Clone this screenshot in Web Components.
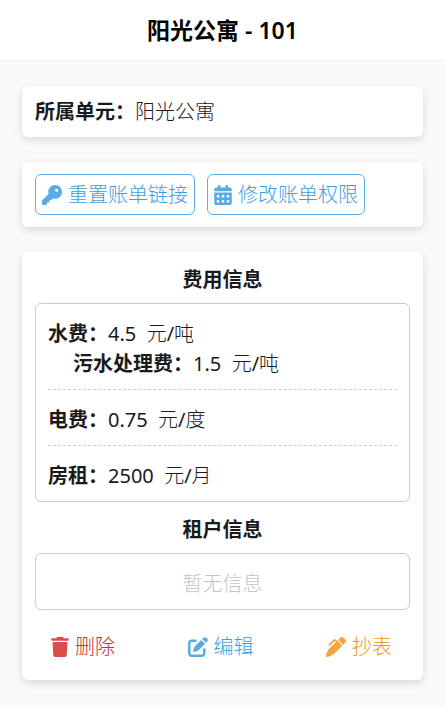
<!DOCTYPE html>
<html lang="zh-CN">
    <head>
        <meta charset="utf-8">
        <meta name="viewport" content="width=device-width, initial-scale=1">
        <title>阳光公寓 - 101</title>
        <style>
            body {
                --bold-font: 'Noto Sans', 'Noto Sans CJK SC', sans-serif;
                margin: 0;
                background: #fafafa;
                color: #1a1a1a;
                font: 400 20px/30px 'Noto Sans', 'Noto Sans CJK SC Light', 'Noto Sans CJK SC', sans-serif;
            }
        </style>
    </head>
    <body>
        <room-page>
            <span slot='title'>阳光公寓 - 101</span>
            <info-card>
                <info-field label='所属单元' single>阳光公寓</info-field>
            </info-card>
            <info-card>
                <button-row>
                    <icon-button icon='key' outlined>重置账单链接</icon-button>
                    <icon-button icon='calendar' outlined>修改账单权限</icon-button>
                </button-row>
            </info-card>
            <info-card>
                <info-section heading='费用信息'>
                    <fee-row>
                        <info-field label='水费'>4.5 &nbsp;元/吨</info-field>
                        <info-field label='污水处理费' nested>1.5 &nbsp;元/吨</info-field>
                    </fee-row>
                    <fee-row>
                        <info-field label='电费'>0.75 &nbsp;元/度</info-field>
                    </fee-row>
                    <fee-row>
                        <info-field label='房租'>2500 &nbsp;元/月</info-field>
                    </fee-row>
                </info-section>
                <info-section heading='租户信息'>
                    <empty-note>暂无信息</empty-note>
                </info-section>
                <button-row spread>
                    <icon-button icon='trash' tone='danger'>删除</icon-button>
                    <icon-button icon='edit'>编辑</icon-button>
                    <icon-button icon='pen' tone='warning'>抄表</icon-button>
                </button-row>
            </info-card>
        </room-page>
        <script>
            const icons = {
                key: [512, 'M336 352c97.2 0 176-78.8 176-176S433.2 0 336 0S160 78.8 160 176c0 18.7 2.9 36.8 8.3 53.7L7 391c-4.5 4.5-7 10.6-7 17v80c0 13.3 10.7 24 24 24h80c13.3 0 24-10.7 24-24V448h40c13.3 0 24-10.7 24-24V384h40c6.4 0 12.5-2.5 17-7l33.3-33.3c16.9 5.4 35 8.3 53.7 8.3zM376 96a40 40 0 1 1 0 80 40 40 0 1 1 0-80z'],
                calendar: [448, 'M128 0c17.7 0 32 14.3 32 32V64H288V32c0-17.7 14.3-32 32-32s32 14.3 32 32V64h48c26.5 0 48 21.5 48 48v48H0V112C0 85.5 21.5 64 48 64H96V32c0-17.7 14.3-32 32-32zM0 192H448V464c0 26.5-21.5 48-48 48H48c-26.5 0-48-21.5-48-48V192zm64 80v32c0 8.8 7.2 16 16 16h32c8.8 0 16-7.2 16-16V272c0-8.8-7.2-16-16-16H80c-8.8 0-16 7.2-16 16zm128 0v32c0 8.8 7.2 16 16 16h32c8.8 0 16-7.2 16-16V272c0-8.8-7.2-16-16-16H208c-8.8 0-16 7.2-16 16zm144-16c-8.8 0-16 7.2-16 16v32c0 8.8 7.2 16 16 16h32c8.8 0 16-7.2 16-16V272c0-8.8-7.2-16-16-16H336zM64 400v32c0 8.8 7.2 16 16 16h32c8.8 0 16-7.2 16-16V400c0-8.8-7.2-16-16-16H80c-8.8 0-16 7.2-16 16zm144-16c-8.8 0-16 7.2-16 16v32c0 8.8 7.2 16 16 16h32c8.8 0 16-7.2 16-16V400c0-8.8-7.2-16-16-16H208zm112 16v32c0 8.8 7.2 16 16 16h32c8.8 0 16-7.2 16-16V400c0-8.8-7.2-16-16-16H336c-8.8 0-16 7.2-16 16z'],
                trash: [448, 'M135.2 17.7L128 32H32C14.3 32 0 46.3 0 64S14.3 96 32 96H416c17.7 0 32-14.3 32-32s-14.3-32-32-32H320l-7.2-14.3C307.4 6.8 296.3 0 284.2 0H163.8c-12.1 0-23.2 6.8-28.6 17.7zM416 128H32L53.2 467c1.6 25.3 22.6 45 47.9 45H346.9c25.3 0 46.3-19.7 47.9-45L416 128z'],
                edit: [512, 'M471.6 21.7c-21.9-21.9-57.3-21.9-79.2 0L362.3 51.7l97.9 97.9 30.1-30.1c21.9-21.9 21.9-57.3 0-79.2L471.6 21.7zm-299.2 220c-6.1 6.1-10.8 13.6-13.5 21.9l-29.6 88.8c-2.9 8.6-.6 18.1 5.8 24.6s15.9 8.7 24.6 5.8l88.8-29.6c8.2-2.7 15.7-7.4 21.9-13.5L437.7 172.3 339.7 74.3 172.4 241.7zM96 64C43 64 0 107 0 160V416c0 53 43 96 96 96H352c53 0 96-43 96-96V320c0-17.7-14.3-32-32-32s-32 14.3-32 32v96c0 17.7-14.3 32-32 32H96c-17.7 0-32-14.3-32-32V160c0-17.7 14.3-32 32-32h96c17.7 0 32-14.3 32-32s-14.3-32-32-32H96z'],
                pen: [512, 'M453.3 19.3l39.4 39.4c25 25 25 65.5 0 90.5l-52.1 52.1 0 0-1-1 0 0-16-16-96-96-17-17 52.1-52.1c25-25 65.5-25 90.5 0zM241 114.9c-9.4-9.4-24.6-9.4-33.9 0L105 217c-9.4 9.4-24.6 9.4-33.9 0s-9.4-24.6 0-33.9L173.1 81c28.1-28.1 73.7-28.1 101.8 0L288 94.1l17 17 96 96 16 16 1 1-17 17L229.5 412.5c-48 48-109.2 80.8-175.8 94.1l-25 5c-7.9 1.6-16-.9-21.7-6.6s-8.1-13.8-6.6-21.7l5-25c13.3-66.6 46.1-127.8 94.1-175.8L254.1 128 241 114.9z']
            };

            class RoomPage extends HTMLElement {
                constructor() {
                    super();
                    const shadowRoot = this.attachShadow({ mode: 'open' });
                    shadowRoot.innerHTML = `
                        <style>
                            :host { display: block; }
                            header { padding: 15px 22px; background: #fff; border-bottom: 1px solid #f0f0f0; text-align: center; }
                            h1 { margin: 0; color: #000; font: 600 23px/30px var(--bold-font); }
                            main { display: flex; flex-direction: column; gap: 25px; padding: 25px 22px; }
                        </style>
                        <header><h1><slot name='title'></slot></h1></header>
                        <main><slot></slot></main>
                    `;
                }
            }
            window.customElements.define('room-page', RoomPage);

            class InfoCard extends HTMLElement {
                constructor() {
                    super();
                    const shadowRoot = this.attachShadow({ mode: 'open' });
                    shadowRoot.innerHTML = `
                        <style>
                            :host { display: block; padding: 12px 13px; border-radius: 6px; background: #fff; box-shadow: 0 3px 8px rgba(0, 0, 0, 0.14); }
                        </style>
                        <slot></slot>
                    `;
                }
            }
            window.customElements.define('info-card', InfoCard);

            class InfoField extends HTMLElement {
                constructor() {
                    super();
                    const shadowRoot = this.attachShadow({ mode: 'open' });
                    shadowRoot.innerHTML = `
                        <style>
                            :host { display: block; }
                            :host([single]) { line-height: 27px; }
                            :host([nested]) { padding-left: 25px; }
                            b { font-family: var(--bold-font); font-weight: 600; }
                        </style>
                        <b>${this.getAttribute('label')}：</b><slot></slot>
                    `;
                }
            }
            window.customElements.define('info-field', InfoField);

            class InfoSection extends HTMLElement {
                constructor() {
                    super();
                    const shadowRoot = this.attachShadow({ mode: 'open' });
                    shadowRoot.innerHTML = `
                        <style>
                            :host { display: block; margin-bottom: 12px; }
                            h2 { margin: 0; padding: 1px 0 8px; font: 600 20px/30px var(--bold-font); text-align: center; }
                            div { padding: 0 12px; border: 1px solid #ccc; border-radius: 6px; }
                        </style>
                        <h2>${this.getAttribute('heading')}</h2>
                        <div><slot></slot></div>
                    `;
                }
            }
            window.customElements.define('info-section', InfoSection);

            class FeeRow extends HTMLElement {
                constructor() {
                    super();
                    const shadowRoot = this.attachShadow({ mode: 'open' });
                    shadowRoot.innerHTML = `
                        <style>
                            :host { display: block; padding: 15px 0 10px; border-bottom: 1px dashed #ccc; }
                            :host(:last-child) { border-bottom: 0; }
                        </style>
                        <slot></slot>
                    `;
                }
            }
            window.customElements.define('fee-row', FeeRow);

            class EmptyNote extends HTMLElement {
                constructor() {
                    super();
                    const shadowRoot = this.attachShadow({ mode: 'open' });
                    shadowRoot.innerHTML = `
                        <style>
                            :host { display: block; padding: 15px 0 10px; color: #c4c4c4; text-align: center; }
                        </style>
                        <slot></slot>
                    `;
                }
            }
            window.customElements.define('empty-note', EmptyNote);

            class ButtonRow extends HTMLElement {
                constructor() {
                    super();
                    const shadowRoot = this.attachShadow({ mode: 'open' });
                    shadowRoot.innerHTML = `
                        <style>
                            :host { display: flex; flex-wrap: wrap; gap: 12px; }
                            :host([spread]) { justify-content: space-between; padding: 10px 18px 6px 16px; }
                        </style>
                        <slot></slot>
                    `;
                }
            }
            window.customElements.define('button-row', ButtonRow);

            class IconButton extends HTMLElement {
                constructor() {
                    super();
                    const [width, path] = icons[this.getAttribute('icon')];
                    const shadowRoot = this.attachShadow({ mode: 'open' });
                    shadowRoot.innerHTML = `
                        <style>
                            :host { display: block; color: #3d9de2; }
                            :host([tone=danger]) { color: #d32f2b; }
                            :host([tone=warning]) { color: #f3961a; }
                            button { display: flex; align-items: center; gap: 6px; padding: 0; border: 0; background: none; color: inherit; font: inherit; cursor: pointer; }
                            :host([outlined]) button { padding: 5px 6px 4px; border: 1px solid #5dade8; border-radius: 6px; }
                            svg { display: block; height: 20px; fill: currentColor; opacity: 0.85; }
                        </style>
                        <button type='button'>
                            <svg viewBox='0 0 ${width} 512' width='${width === 512 ? 20 : 18}' aria-hidden='true'><path d='${path}'/></svg>
                            <span><slot></slot></span>
                        </button>
                    `;
                }
            }
            window.customElements.define('icon-button', IconButton);
        </script>
    </body>
</html>
